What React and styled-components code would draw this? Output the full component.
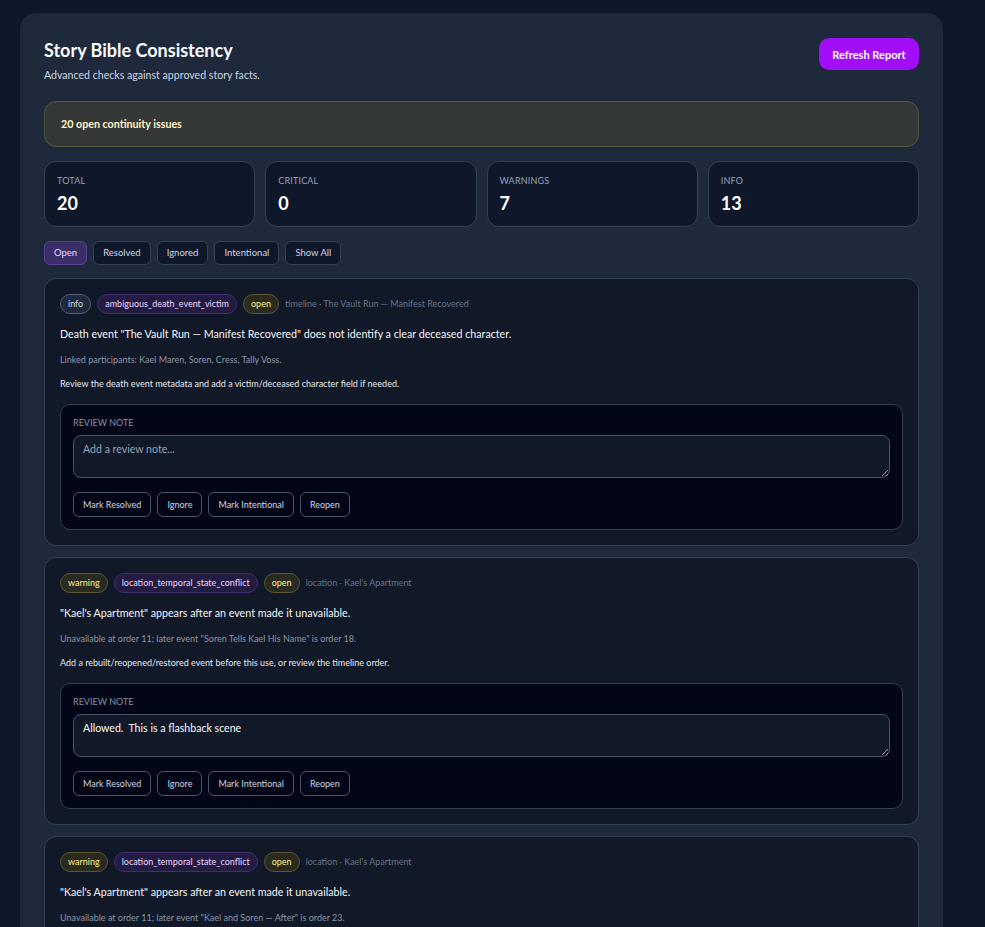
import styled, { createGlobalStyle } from "styled-components";

const GlobalStyle = createGlobalStyle`
  html, body {
    margin: 0;
    padding: 0;
    background-color: #0f172a;
  }

  body {
    font-family: Lato, "Noto Sans", sans-serif;
    color: #e2e8f0;
  }
`;

const Page = styled.div`
  padding: 13px 42px 40px 20px;
`;

const Panel = styled.div`
  display: flex;
  flex-direction: column;
  gap: 14px;
  padding: 24px;

  border-radius: 16px;
  background-color: #1e293b;
`;

const HeaderBox = styled.div`
  display: flex;
  justify-content: space-between;
  align-items: flex-start;
  margin-bottom: 6px;
`;

const Title = styled.h1`
  margin: 3px 0 0;
  font-size: 18px;
  font-weight: 700;
  color: #f8fafc;
  line-height: 1.2;
`;

const Subtitle = styled.p`
  margin: 7px 0 0;
  font-size: 10.6px;
  color: #cbd5e1;
`;

const PrimaryButton = styled.button`
  height: 32px;
  width: 100px;
  margin-top: 1px;

  border: none;
  border-radius: 10px;
  background-color: #a10ef7;
  color: #ffffff;
  font-family: inherit;
  font-size: 11px;
  font-weight: 700;
`;

const Banner = styled.div`
  display: flex;
  align-items: center;
  height: 46px;
  padding: 0 16px;
  box-sizing: border-box;

  border: 1px solid #56563c;
  border-radius: 12px;
  background-color: #343836;
  color: #fef3c7;
  font-size: 10.7px;
  font-weight: 700;
`;

const StatGrid = styled.div`
  display: grid;
  grid-template-columns: repeat(4, 1fr);
  gap: 10px;
`;

const StatCard = styled.div`
  display: flex;
  flex-direction: column;
  height: 66px;
  padding: 13px 12px;
  box-sizing: border-box;

  border: 1px solid #334155;
  border-radius: 12px;
  background-color: #0f172a;
`;

const StatLabel = styled.div`
  font-size: 9px;
  text-transform: uppercase;
  color: #94a3b8;
  letter-spacing: 0.02em;
`;

const StatValue = styled.div`
  margin-top: 6px;
  font-size: 18px;
  font-weight: 700;
  color: #ffffff;
`;

const FilterRow = styled.div`
  display: flex;
  gap: 6px;
  margin-bottom: -1px;
`;

const FilterButton = styled.button`
  height: 24px;
  padding: 0 9px;

  border: 1px solid ${(p) => (p.$active ? "#5b3f9a" : "#334155")};
  border-radius: 6px;
  background-color: ${(p) => (p.$active ? "#3b2d68" : "#0f172a")};
  color: ${(p) => (p.$active ? "#e9d5ff" : "#cbd5e1")};
  font-family: inherit;
  font-size: 9.5px;
`;

const IssueList = styled.div`
  display: flex;
  flex-direction: column;
  gap: 11px;
`;

const IssueCard = styled.div`
  display: flex;
  flex-direction: column;
  padding: 15px;

  border: 1px solid #334155;
  border-radius: 12px;
  background-color: #111827;
`;

const ChipRow = styled.div`
  display: flex;
  align-items: center;
  gap: 6px;
`;

const chipColors = {
  info: { bg: "#1e293b", border: "#516077", fg: "#cbd5e1" },
  type: { bg: "#231b42", border: "#3f2d70", fg: "#e9d5ff" },
  warn: { bg: "#2a2a1f", border: "#5b5531", fg: "#fef08a" },
};

const Chip = styled.span`
  display: inline-flex;
  align-items: center;
  height: 20px;
  padding: 0 7px;
  box-sizing: border-box;

  border: 1px solid ${(p) => chipColors[p.$tone].border};
  border-radius: 999px;
  background-color: ${(p) => chipColors[p.$tone].bg};
  color: ${(p) => chipColors[p.$tone].fg};
  font-size: 9px;
`;

const Meta = styled.span`
  font-size: 9px;
  color: #64748b;
`;

const Message = styled.p`
  margin: 12px 0 0;
  font-size: 10.7px;
  line-height: 16px;
  color: #f1f5f9;
`;

const Detail = styled.p`
  margin: 11px 0 0;
  font-size: 9px;
  line-height: 14px;
  color: #8b96a8;
`;

const Suggestion = styled.p`
  margin: 10px 0 0;
  font-size: 9px;
  line-height: 14px;
  color: #e2e8f0;
`;

const ReviewBox = styled.div`
  display: flex;
  flex-direction: column;
  margin-top: 13px;
  padding: 12px;

  border: 1px solid #334155;
  border-radius: 10px;
  background-color: #020617;
`;

const ReviewLabel = styled.label`
  font-size: 9px;
  line-height: 12px;
  text-transform: uppercase;
  color: #8290a4;
`;

const NoteInput = styled.textarea`
  height: 43px;
  margin-top: 6px;
  padding: 7px 9px;
  box-sizing: border-box;

  border: 1px solid #475569;
  border-radius: 8px;
  background-color: #111827;
  color: #f8fafc;
  font-family: inherit;
  font-size: 10.6px;
  resize: vertical;
  outline: none;

  &::placeholder {
    color: #94a3b8;
  }
`;

const ActionRow = styled.div`
  display: flex;
  gap: 6px;
  margin-top: 14px;
`;

const ActionButton = styled.button`
  height: 25px;
  padding: 0 9px;

  border: 1px solid #475569;
  border-radius: 6px;
  background-color: transparent;
  color: #cbd5e1;
  font-family: inherit;
  font-size: 9px;
`;

const stats = [
  { label: "Total", value: 20 },
  { label: "Critical", value: 0 },
  { label: "Warnings", value: 7 },
  { label: "Info", value: 13 },
];

const filters = ["Open", "Resolved", "Ignored", "Intentional", "Show All"];

const issues = [
  {
    severity: "info",
    code: "ambiguous_death_event_victim",
    meta: "timeline · The Vault Run — Manifest Recovered",
    message:
      'Death event "The Vault Run — Manifest Recovered" does not identify a clear deceased character.',
    detail: "Linked participants: Kael Maren, Soren, Cress, Tally Voss.",
    suggestion:
      "Review the death event metadata and add a victim/deceased character field if needed.",
    note: "",
  },
  {
    severity: "warning",
    code: "location_temporal_state_conflict",
    meta: "location · Kael's Apartment",
    message: '"Kael\'s Apartment" appears after an event made it unavailable.',
    detail:
      'Unavailable at order 11; later event "Soren Tells Kael His Name" is order 18.',
    suggestion:
      "Add a rebuilt/reopened/restored event before this use, or review the timeline order.",
    note: "Allowed.  This is a flashback scene",
  },
  {
    severity: "warning",
    code: "location_temporal_state_conflict",
    meta: "location · Kael's Apartment",
    message: '"Kael\'s Apartment" appears after an event made it unavailable.',
    detail:
      'Unavailable at order 11; later event "Kael and Soren — After" is order 23.',
    suggestion:
      "Add a rebuilt/reopened/restored event before this use, or review the timeline order.",
    note: "",
  },
];

function IssueItem({ issue }) {
  return (
    <IssueCard>
      <ChipRow>
        <Chip $tone={issue.severity === "info" ? "info" : "warn"}>
          {issue.severity}
        </Chip>
        <Chip $tone="type">{issue.code}</Chip>
        <Chip $tone="warn">open</Chip>
        <Meta>{issue.meta}</Meta>
      </ChipRow>
      <Message>{issue.message}</Message>
      <Detail>{issue.detail}</Detail>
      <Suggestion>{issue.suggestion}</Suggestion>
      <ReviewBox>
        <ReviewLabel>Review note</ReviewLabel>
        <NoteInput
          placeholder="Add a review note..."
          defaultValue={issue.note}
        />
        <ActionRow>
          <ActionButton>Mark Resolved</ActionButton>
          <ActionButton>Ignore</ActionButton>
          <ActionButton>Mark Intentional</ActionButton>
          <ActionButton>Reopen</ActionButton>
        </ActionRow>
      </ReviewBox>
    </IssueCard>
  );
}

export default function App() {
  return (
    <Page>
      <GlobalStyle />
      <Panel>
        <HeaderBox>
          <div>
            <Title>Story Bible Consistency</Title>
            <Subtitle>Advanced checks against approved story facts.</Subtitle>
          </div>
          <PrimaryButton>Refresh Report</PrimaryButton>
        </HeaderBox>
        <Banner>20 open continuity issues</Banner>
        <StatGrid>
          {stats.map((s) => (
            <StatCard key={s.label}>
              <StatLabel>{s.label}</StatLabel>
              <StatValue>{s.value}</StatValue>
            </StatCard>
          ))}
        </StatGrid>
        <FilterRow>
          {filters.map((f) => (
            <FilterButton key={f} $active={f === "Open"}>
              {f}
            </FilterButton>
          ))}
        </FilterRow>
        <IssueList>
          {issues.map((issue, index) => (
            <IssueItem key={issue.code + index} issue={issue} />
          ))}
        </IssueList>
      </Panel>
    </Page>
  );
}
